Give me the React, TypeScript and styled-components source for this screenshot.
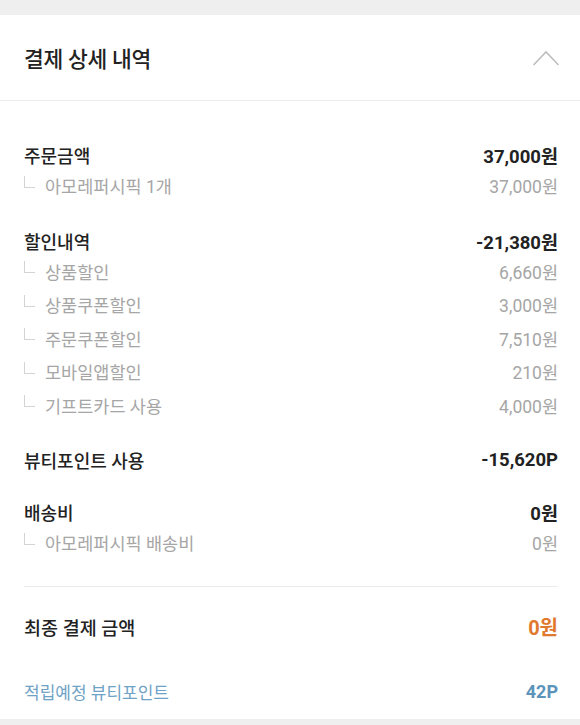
import styled, { createGlobalStyle } from "styled-components";

const GlobalStyle = createGlobalStyle`
  html, body {
    margin: 0;
    padding: 0;
    background: #efefef;
  }
  body {
    font-family: Roboto, "Noto Sans CJK KR", "Noto Sans", sans-serif;
    color: #222;
  }
`;

const Page = styled.div`
  padding: 15px 0 5px;
  background: #efefef;
`;

const Card = styled.section`
  background: #fff;
`;

const Header = styled.div`
  height: 85px;
  display: flex;
  align-items: center;
  justify-content: space-between;
  padding: 0 20px 0 24px;
  border-bottom: 1px solid #ececec;

  h2 {
    margin: 0;
    font-size: 21.5px;
    font-weight: 500;
    color: #222;
    letter-spacing: -0.3px;
  }
`;

const Body = styled.div`
  padding: 40px 22px 14px 24px;
`;

const Group = styled.div`
  & + & {
    margin-top: 24px;
  }
`;

const MainRow = styled.div`
  height: 28px;
  display: flex;
  align-items: center;
  justify-content: space-between;
  font-size: 18px;
  font-weight: 500;
  color: #222;

  b {
    font-weight: 700;
    font-size: 18.5px;
  }
`;

const SubRow = styled.div`
  height: 33.5px;
  display: flex;
  align-items: center;
  justify-content: space-between;
  font-size: 17.5px;
  color: #a6a6a6;
`;

const SubLabel = styled.span`
  display: flex;
  align-items: center;
  gap: 10px;
`;

const Branch = styled.i`
  display: inline-block;
  width: 10px;
  height: 11px;
  margin-top: -8px;
  border-left: 1px solid #d4d4d4;
  border-bottom: 1px solid #d4d4d4;
`;

const Divider = styled.hr`
  margin: 26px 0 0;
  border: 0;
  border-top: 1px solid #ececec;
`;

const TotalRow = styled.div`
  height: 40px;
  margin-top: 20px;
  display: flex;
  align-items: center;
  justify-content: space-between;
  font-size: 18.5px;
  font-weight: 500;
  color: #222;

  b {
    font-size: 20px;
    font-weight: 700;
    color: #e0782d;
  }
`;

const PointRow = styled.div`
  height: 26px;
  margin-top: 32px;
  display: flex;
  align-items: center;
  justify-content: space-between;
  font-size: 17px;
  color: #6fa3c6;

  b {
    font-size: 18px;
    font-weight: 700;
    color: #5b93ba;
  }
`;

const Chevron = () => (
  <svg width="28" height="18" viewBox="0 0 28 18" fill="none">
    <path d="M1.5 16 L14 3 L26.5 16" stroke="#bdbdbd" strokeWidth="1.6" />
  </svg>
);

type Line = { label: string; amount: string };
type Section = { label: string; amount: string; subs: Line[] };

const sections: Section[] = [
  {
    label: "주문금액",
    amount: "37,000원",
    subs: [{ label: "아모레퍼시픽 1개", amount: "37,000원" }],
  },
  {
    label: "할인내역",
    amount: "-21,380원",
    subs: [
      { label: "상품할인", amount: "6,660원" },
      { label: "상품쿠폰할인", amount: "3,000원" },
      { label: "주문쿠폰할인", amount: "7,510원" },
      { label: "모바일앱할인", amount: "210원" },
      { label: "기프트카드 사용", amount: "4,000원" },
    ],
  },
  { label: "뷰티포인트 사용", amount: "-15,620P", subs: [] },
  {
    label: "배송비",
    amount: "0원",
    subs: [{ label: "아모레퍼시픽 배송비", amount: "0원" }],
  },
];

export default function App() {
  return (
    <Page>
      <GlobalStyle />
      <Card>
        <Header>
          <h2>결제 상세 내역</h2>
          <Chevron />
        </Header>
        <Body>
          {sections.map((s) => (
            <Group key={s.label}>
              <MainRow>
                <span>{s.label}</span>
                <b>{s.amount}</b>
              </MainRow>
              {s.subs.map((sub) => (
                <SubRow key={sub.label}>
                  <SubLabel>
                    <Branch />
                    {sub.label}
                  </SubLabel>
                  <span>{sub.amount}</span>
                </SubRow>
              ))}
            </Group>
          ))}
          <Divider />
          <TotalRow>
            <span>최종 결제 금액</span>
            <b>0원</b>
          </TotalRow>
          <PointRow>
            <span>적립예정 뷰티포인트</span>
            <b>42P</b>
          </PointRow>
        </Body>
      </Card>
    </Page>
  );
}
